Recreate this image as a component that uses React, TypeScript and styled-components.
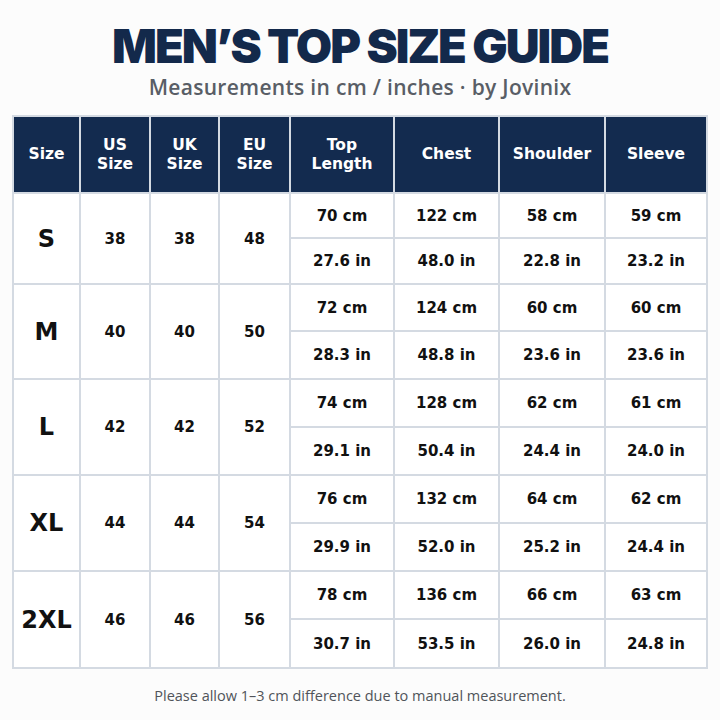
import React from "react";
import styled, { createGlobalStyle } from "styled-components";

const Global = createGlobalStyle`
  html, body { margin: 0; padding: 0; background: #fcfcfc; }
  * { box-sizing: border-box; }
`;

const Page = styled.div`
  width: 720px;
  height: 720px;
  display: flex;
  flex-direction: column;
  align-items: center;
  padding-top: 20px;
  background: #fcfcfc;
`;

const Title = styled.h1`
  margin: 0;
  font-family: Inter, "Liberation Sans", sans-serif;
  font-weight: 900;
  font-size: 47px;
  line-height: 52px;
  letter-spacing: -2px;
  color: #13294b;
`;

const Subtitle = styled.div`
  margin-top: 2px;
  font-family: "Open Sans", "Liberation Sans", sans-serif;
  font-weight: 600;
  font-size: 21px;
  line-height: 27px;
  letter-spacing: 0.3px;
  color: #595e66;
`;

const Grid = styled.div`
  margin-top: 14px;
  width: 696px;
  display: grid;
  grid-template-columns: 65px 68px 67px 69px 102px 103px 104px 100px;
  grid-template-rows: 75px 43px 44px 45px 46px 46px 46px 46px 46px 46px 47px;
  gap: 2px;
  padding: 2px;
  background: #d4dae2;
`;

const HeadCell = styled.div`
  background: #132b4f;
  color: #ffffff;
  display: flex;
  align-items: center;
  justify-content: center;
  text-align: center;
  font-family: "DejaVu Sans", Verdana, sans-serif;
  font-weight: 700;
  font-size: 15.5px;
  line-height: 19px;
`;

const Cell = styled.div<{ $span?: boolean; $big?: boolean }>`
  background: #ffffff;
  display: flex;
  align-items: center;
  justify-content: center;
  grid-row: ${(p) => (p.$span ? "span 2" : "auto")};
  font-family: "DejaVu Sans", Verdana, sans-serif;
  font-weight: 700;
  font-size: ${(p) => (p.$big ? "24px" : "15px")};
  color: #111111;
`;

const Note = styled.div`
  margin-top: 17px;
  font-family: "Open Sans", "Liberation Sans", sans-serif;
  font-weight: 500;
  font-size: 14.5px;
  color: #50545a;
`;

const headers = ["Size", "US\nSize", "UK\nSize", "EU\nSize", "Top\nLength", "Chest", "Shoulder", "Sleeve"];

const rows = [
  { size: "S", us: "38", uk: "38", eu: "48", cm: ["70", "122", "58", "59"], inch: ["27.6", "48.0", "22.8", "23.2"] },
  { size: "M", us: "40", uk: "40", eu: "50", cm: ["72", "124", "60", "60"], inch: ["28.3", "48.8", "23.6", "23.6"] },
  { size: "L", us: "42", uk: "42", eu: "52", cm: ["74", "128", "62", "61"], inch: ["29.1", "50.4", "24.4", "24.0"] },
  { size: "XL", us: "44", uk: "44", eu: "54", cm: ["76", "132", "64", "62"], inch: ["29.9", "52.0", "25.2", "24.4"] },
  { size: "2XL", us: "46", uk: "46", eu: "56", cm: ["78", "136", "66", "63"], inch: ["30.7", "53.5", "26.0", "24.8"] },
];

export default function App() {
  return (
    <>
      <Global />
      <Page>
        <Title>MEN’S TOP SIZE GUIDE</Title>
        <Subtitle>Measurements in cm / inches · by Jovinix</Subtitle>
        <Grid>
          {headers.map((h) => (
            <HeadCell key={h}>
              <span>
                {h.split("\n").map((l, i) => (
                  <React.Fragment key={i}>
                    {i > 0 && <br />}
                    {l}
                  </React.Fragment>
                ))}
              </span>
            </HeadCell>
          ))}
          {rows.map((r) => (
            <React.Fragment key={r.size}>
              <Cell $span $big>{r.size}</Cell>
              <Cell $span>{r.us}</Cell>
              <Cell $span>{r.uk}</Cell>
              <Cell $span>{r.eu}</Cell>
              {r.cm.map((v, i) => (
                <Cell key={"c" + i}>{v} cm</Cell>
              ))}
              {r.inch.map((v, i) => (
                <Cell key={"i" + i}>{v} in</Cell>
              ))}
            </React.Fragment>
          ))}
        </Grid>
        <Note>Please allow 1–3 cm difference due to manual measurement.</Note>
      </Page>
    </>
  );
}
